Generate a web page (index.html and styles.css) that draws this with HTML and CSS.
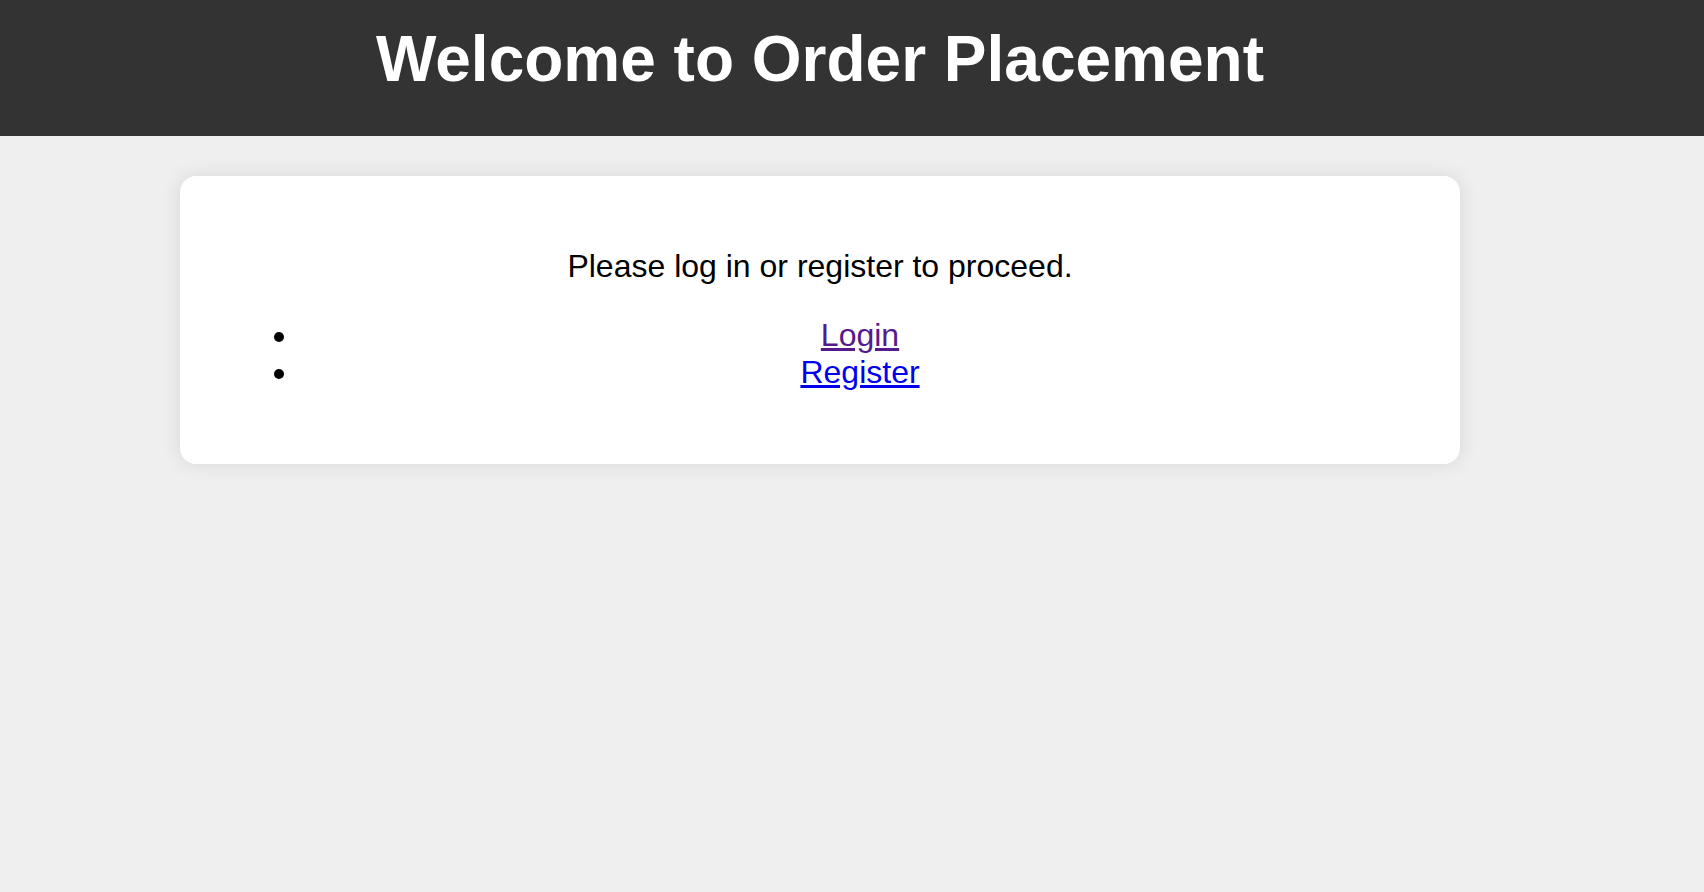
FILE: index.html
```html
<!DOCTYPE html>
<html lang="en">
<head>
<meta charset="utf-8">
<title>Order Placement</title>
<link rel="stylesheet" href="styles.css">
</head>
<body>
<header class="site-header">
  <h1 class="site-title">Welcome to Order Placement</h1>
</header>
<main class="main">
  <section class="card">
    <p class="card-text">Please log in or register to proceed.</p>
    <ul class="link-list">
      <li><a class="link visited" href="#">Login</a></li>
      <li><a class="link" href="#">Register</a></li>
    </ul>
  </section>
</main>
</body>
</html>
```

FILE: styles.css
```css
html, body {
  margin: 0;
  padding: 0;
}
body {
  background: #efefef;
  font-family: "Liberation Sans", Arial, sans-serif;
  color: #000;
  min-height: 892px;
}
.site-header {
  background: #333333;
  color: #ffffff;
  box-sizing: border-box;
  height: 136px;
  padding: 22px 64px 0 0;
  text-align: center;
}
.site-title {
  margin: 0;
  font-size: 64px;
  line-height: 74px;
  font-weight: bold;
}
.main {
  padding: 40px 64px 0 0;
}
.card {
  max-width: 1200px;
  margin: 0 auto;
  padding: 40px;
  background: #ffffff;
  border-radius: 16px;
  box-shadow: 0 0 20px rgba(0, 0, 0, 0.1);
  text-align: center;
}
.card-text {
  font-size: 32px;
  margin: 32px 0 32px;
}
.link-list {
  font-size: 32px;
  margin: 32px 0 33px;
  padding-left: 80px;
}
.link {
  color: #0000ee;
}
.link.visited {
  color: #551a8b;
}
```
